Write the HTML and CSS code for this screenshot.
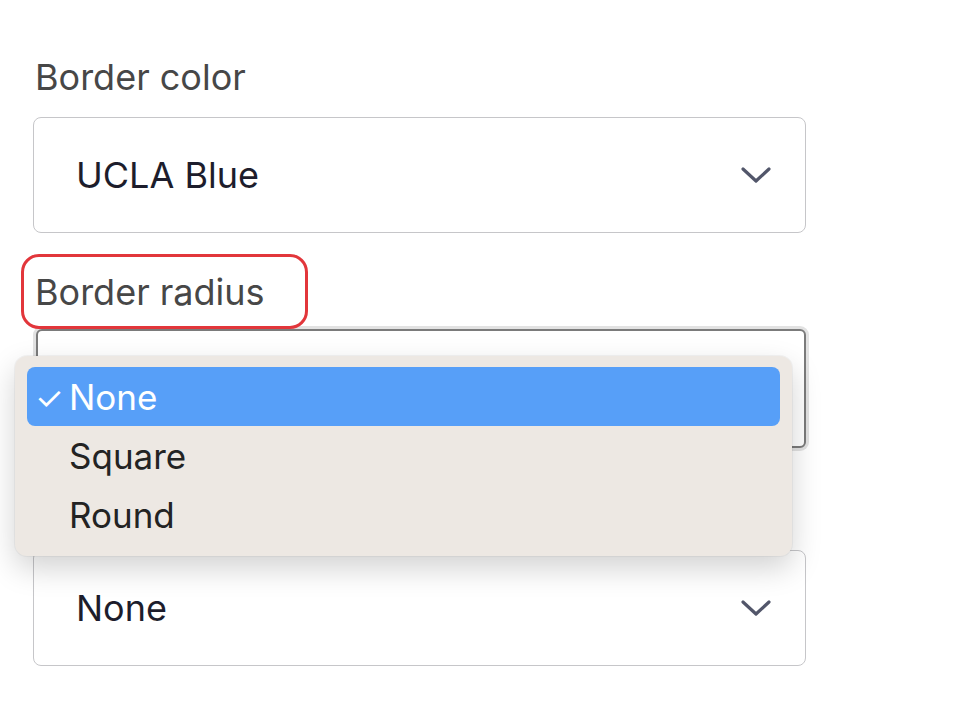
FILE: index.html
```html
<!DOCTYPE html>
<html lang="en">
<head>
<meta charset="utf-8">
<title>Border settings</title>
<link rel="stylesheet" href="styles.css">
</head>
<body>
<div class="form">
  <div class="field">
    <label class="label">Border color</label>
    <div class="select">
      <span class="value">UCLA Blue</span>
      <svg class="chevron" width="30" height="16" viewBox="0 0 30 16"><path d="M2 2 L15 14 L28 2" fill="none" stroke="#52566a" stroke-width="3.2" stroke-linecap="round" stroke-linejoin="round"/></svg>
    </div>
  </div>
  <div class="field field-open">
    <label class="label label-marked">Border radius</label>
    <div class="select select-focus"></div>
    <ul class="menu">
      <li class="item item-active"><span class="check">✓</span>None</li>
      <li class="item"><span class="check"></span>Square</li>
      <li class="item"><span class="check"></span>Round</li>
    </ul>
  </div>
  <div class="field">
    <div class="label-spacer"></div>
    <div class="select">
      <span class="value">None</span>
      <svg class="chevron" width="30" height="16" viewBox="0 0 30 16"><path d="M2 2 L15 14 L28 2" fill="none" stroke="#52566a" stroke-width="3.2" stroke-linecap="round" stroke-linejoin="round"/></svg>
    </div>
  </div>
</div>
</body>
</html>
```

FILE: styles.css
```css
html, body {
  margin: 0;
  padding: 0;
  background: #ffffff;
}

body {
  font-family: Inter, "Liberation Sans", sans-serif;
}

.form {
  width: 773px;
  padding: 52px 0 0 33px;
  display: flex;
  flex-direction: column;
  gap: 34px;
}

.field {
  position: relative;
  display: flex;
  flex-direction: column;
  align-items: flex-start;
  gap: 15px;
}

.field-open {
  z-index: 2;
}

.label {
  position: relative;
  display: block;
  font-size: 36px;
  line-height: 50px;
  color: #474747;
  padding-left: 2px;
}

.label-spacer {
  height: 53px;
}

.label-marked::before {
  content: "";
  position: absolute;
  box-sizing: border-box;
  left: -12px;
  top: -13px;
  width: 287px;
  height: 75px;
  border: 3px solid #e2363b;
  border-radius: 18px;
}

.select {
  box-sizing: border-box;
  width: 773px;
  height: 116px;
  border: 1.5px solid #c6c6c9;
  border-radius: 8px;
  background: #ffffff;
  display: flex;
  align-items: center;
  justify-content: space-between;
  padding: 0 34px 0 42px;
}

.value {
  font-size: 36px;
  color: #1d1d2c;
}

.chevron {
  display: block;
}

.select-focus {
  width: 770px;
  height: 119px;
  margin-left: 3px;
  margin-top: -3px;
  border: 2px solid #7b7b7b;
  border-radius: 6px;
  box-shadow: 0 0 0 3px #e2e2e2;
}

.menu {
  position: absolute;
  left: -18px;
  top: 89px;
  box-sizing: border-box;
  width: 777px;
  height: 200px;
  margin: 0;
  padding: 11px 12px;
  list-style: none;
  background: #ede8e3;
  border-radius: 12px;
  box-shadow: 0 12px 30px rgba(0, 0, 0, 0.18), 0 0 0 1px rgba(0, 0, 0, 0.04);
}

.item {
  height: 59px;
  display: flex;
  align-items: center;
  font-size: 35px;
  color: #232323;
  border-radius: 8px;
}

.check {
  width: 42px;
  padding-left: 8px;
  box-sizing: border-box;
  font-size: 32px;
  line-height: 1;
  padding-top: 4px;
}

.item-active {
  background: #579ff8;
  color: #ffffff;
}
```
